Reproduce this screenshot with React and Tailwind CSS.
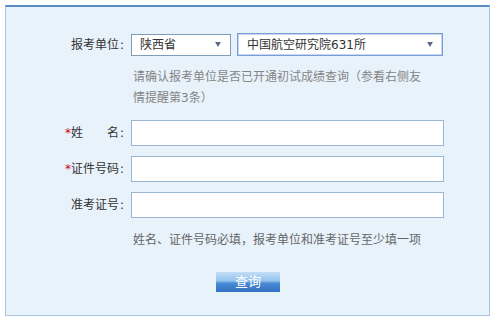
const font = "font-['DejaVu_Sans','Noto_Sans_CJK_SC',sans-serif]"

const Arrow = () => (
  <svg width="6" height="5" viewBox="0 0 6 5" className="shrink-0">
    <path d="M0 0 L6 0 L3 5 Z" fill="#616b88" />
  </svg>
)

const Label = ({ star, children }) => (
  <div className="w-[119px] shrink-0 text-right text-[12px] text-[#333] whitespace-nowrap">
    {star && <span className="text-[#d0021b]">*</span>}
    {children}
    <span className="inline-block w-[6px] text-center">:</span>
  </div>
)

const Field = ({ label, star }) => (
  <div className="flex items-center">
    <Label star={star}>{label}</Label>
    <input className="ml-[6px] w-[313px] h-[26px] border border-[#98b5d4] bg-white outline-none px-1 text-[12px]" />
  </div>
)

export default function App() {
  return (
    <div className={`${font} bg-white w-[493px] h-[321px] pt-[5px] pl-[5px]`}>
      <div className="w-[485px] h-[311px] bg-[#e8f2fb] border border-[#a8c4e0] border-t-2 border-t-[#5a8bc1]">
        <div className="mt-[26px] flex items-center h-[23px]">
          <Label>报考单位</Label>
          <div className="ml-[6px] w-[100px] h-[22px] border border-[#7f9db9] bg-white flex items-center justify-between pl-[8px] pr-[9px] text-[12px] text-[#333]">
            <span>陕西省</span>
            <Arrow />
          </div>
          <div className="ml-[6px] w-[206px] h-[23px] border border-[#7a9dd6] shadow-[inset_0_0_0_1px_#c3d7f1] bg-white flex items-center justify-between pl-[9px] pr-[9px] text-[12px] text-[#333]">
            <span>中国航空研究院631所</span>
            <Arrow />
          </div>
        </div>

        <div className="mt-[11px] ml-[127px] text-[12px] leading-[21px] text-[#858585] whitespace-nowrap">
          请确认报考单位是否已开通初试成绩查询（参看右侧友
          <br />
          情提醒第3条）
        </div>

        <div className="mt-[11px] flex flex-col gap-[10px]">
          <Field star label="姓　　名" />
          <Field star label="证件号码" />
          <Field label="准考证号" />
        </div>

        <div className="mt-[12px] ml-[127px] text-[12px] leading-[21px] text-[#666] whitespace-nowrap">
          姓名、证件号码必填，报考单位和准考证号至少填一项
        </div>

        <div className="mt-[18px] ml-[210px]">
          <button className="w-[64px] h-[20px] text-white text-[13px] leading-[20px] bg-[linear-gradient(to_bottom,#c3def6_0%,#94c2ec_45%,#4a8ad6_55%,#3471c2_100%)]">
            查询
          </button>
        </div>
      </div>
    </div>
  )
}
